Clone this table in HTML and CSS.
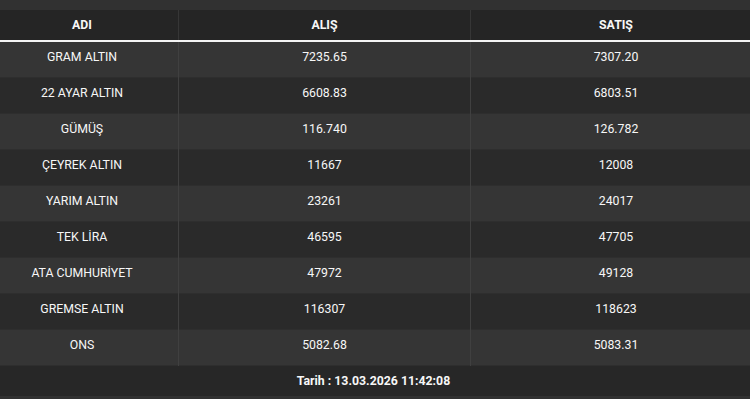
FILE: index.html
```html
<!DOCTYPE html>
<html lang="tr">
<head>
<meta charset="utf-8">
<link rel="stylesheet" href="styles.css">
</head>
<body>
<div class="wrap">
<table class="rates">
<thead>
<tr><th class="c1">ADI</th><th class="c2">ALIŞ</th><th class="c3">SATIŞ</th></tr>
</thead>
<tbody>
<tr><td>GRAM ALTIN</td><td>7235.65</td><td>7307.20</td></tr>
<tr><td>22 AYAR ALTIN</td><td>6608.83</td><td>6803.51</td></tr>
<tr><td>GÜMÜŞ</td><td>116.740</td><td>126.782</td></tr>
<tr><td>ÇEYREK ALTIN</td><td>11667</td><td>12008</td></tr>
<tr><td>YARIM ALTIN</td><td>23261</td><td>24017</td></tr>
<tr><td>TEK LİRA</td><td>46595</td><td>47705</td></tr>
<tr><td>ATA CUMHURİYET</td><td>47972</td><td>49128</td></tr>
<tr><td>GREMSE ALTIN</td><td>116307</td><td>118623</td></tr>
<tr><td>ONS</td><td>5082.68</td><td>5083.31</td></tr>
</tbody>
<tfoot>
<tr><td colspan="3">Tarih : 13.03.2026 11:42:08</td></tr>
</tfoot>
</table>
</div>
</body>
</html>
```
FILE: styles.css
```css
html, body {
  margin: 0;
  padding: 0;
  background: #313131;
  overflow: hidden;
}
.wrap {
  padding-top: 10px;
  width: 750px;
  overflow: hidden;
}
.rates {
  border-collapse: collapse;
  width: 775px;
  margin-left: -14px;
  table-layout: fixed;
  font-family: Roboto, "Liberation Sans", sans-serif;
  font-size: 12.3px;
  color: #f7f7f7;
  text-align: center;
}
.c1 { width: 192px; }
.c2 { width: 291px; }
.rates th {
  background: #252525;
  height: 30px;
  padding: 0;
  font-weight: 700;
  border-left: 1px solid #363636;
  border-bottom: 2px solid #f4f4f4;
}
.rates th:first-child { border-left: none; }
.rates tbody td {
  height: 29px;
  padding: 0 0 6px;
  border-left: 1px solid #404040;
  border-top: 1px solid #2e2e2e;
}
.rates tbody td:first-child { border-left: none; }
.rates tbody tr:nth-child(odd) td { background: #353535; }
.rates tbody tr:nth-child(even) td { background: #2a2a2a; }
.rates tfoot td {
  background: #272727;
  height: 30px;
  padding: 0;
  font-weight: 700;
  border-top: 1px solid #2e2e2e;
}
```
